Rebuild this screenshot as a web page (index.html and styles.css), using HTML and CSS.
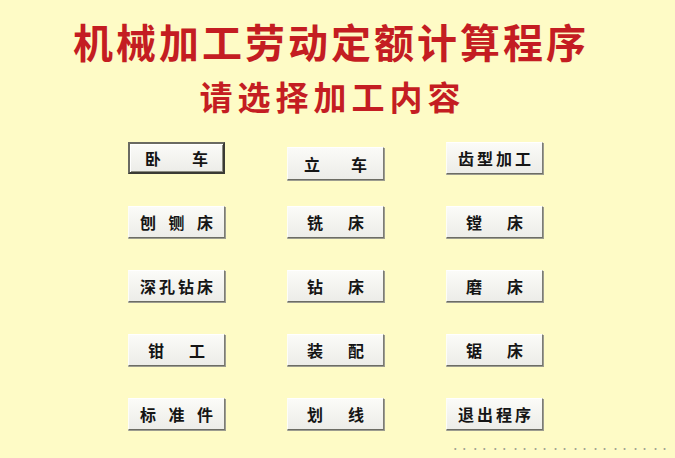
FILE: index.html
```html
<!DOCTYPE html>
<html lang="zh-CN">
<head>
<meta charset="utf-8">
<link rel="stylesheet" href="styles.css">
</head>
<body>
<div class="page">
  <h1 class="title">机械加工劳动定额计算程序</h1>
  <h2 class="subtitle">请选择加工内容</h2>
  <div class="grid">
    <button class="btn two focused"><span>卧</span><span>车</span></button>
    <button class="btn two low"><span>立</span><span>车</span></button>
    <button class="btn four"><span>齿</span><span>型</span><span>加</span><span>工</span></button>

    <button class="btn three"><span>刨</span><span>铡</span><span>床</span></button>
    <button class="btn two wide"><span>铣</span><span>床</span></button>
    <button class="btn two wide"><span>镗</span><span>床</span></button>

    <button class="btn four"><span>深</span><span>孔</span><span>钻</span><span>床</span></button>
    <button class="btn two wide"><span>钻</span><span>床</span></button>
    <button class="btn two wide"><span>磨</span><span>床</span></button>

    <button class="btn two wide"><span>钳</span><span>工</span></button>
    <button class="btn two wide"><span>装</span><span>配</span></button>
    <button class="btn two wide"><span>锯</span><span>床</span></button>

    <button class="btn three"><span>标</span><span>准</span><span>件</span></button>
    <button class="btn two wide"><span>划</span><span>线</span></button>
    <button class="btn four"><span>退</span><span>出</span><span>程</span><span>序</span></button>
  </div>
  <div class="footnote">·· ·· ·· ·· ·· ·· ·· ·· ·· ·· ··</div>
</div>
</body>
</html>
```
FILE: styles.css
```css
html, body {
  margin: 0;
  padding: 0;
  background: #fefbc6;
}
.page {
  width: 675px;
  height: 458px;
  overflow: hidden;
  background: #fefbc6;
  display: flex;
  flex-direction: column;
  align-items: center;
  font-family: "Noto Sans CJK SC", sans-serif;
}
.title {
  margin: 17px 0 0 0;
  font-size: 40px;
  line-height: 48px;
  letter-spacing: 3px;
  color: #c41d22;
  font-weight: bold;
  padding-left: 3px;
  transform: translateX(-8px);
}
.subtitle {
  margin: 11px 0 0 0;
  font-size: 33px;
  line-height: 40px;
  letter-spacing: 5px;
  color: #c41d22;
  font-weight: bold;
  transform: translateX(-5px);
}
.grid {
  align-self: flex-start;
  margin: 26px 0 0 128px;
  display: grid;
  grid-template-columns: repeat(3, 97px);
  grid-auto-rows: 32px;
  column-gap: 62px;
  row-gap: 32px;
  align-items: start;
}
.btn {
  height: 32px;
  width: 97px;
  box-sizing: border-box;
  margin: 0;
  display: flex;
  align-items: center;
  justify-content: space-between;
  font-family: "Noto Sans CJK SC", sans-serif;
  font-size: 16px;
  font-weight: bold;
  color: #151515;
  background: linear-gradient(#fbfbf8, #ecece8);
  border: 1px solid;
  border-color: #ffffff #7c7c74 #6c6c64 #fdfdf8;
  box-shadow: 1px 1px 0 #9c9c90, 0 1px 0 #b0b0a0;
  cursor: default;
}
.btn.two { padding: 0 16px; }
.btn.two.wide { padding: 0 19px; }
.btn.three { padding: 0 11px; }
.btn.four { padding: 0 11px; letter-spacing: 0; }
.btn.low { margin-top: 5px; height: 33px; }
.btn.focused {
  border: 2px solid;
  border-color: #6a6a62 #3a3a34 #3a3a34 #6a6a62;
  box-shadow: inset 1px 1px 0 #ffffff, inset -1px -1px 0 #8a8a80;
  padding: 0 15px;
}
.footnote {
  align-self: flex-end;
  margin: 14px 6px 0 0;
  font-size: 9px;
  line-height: 10px;
  color: #a0a090;
  white-space: nowrap;
}
```
